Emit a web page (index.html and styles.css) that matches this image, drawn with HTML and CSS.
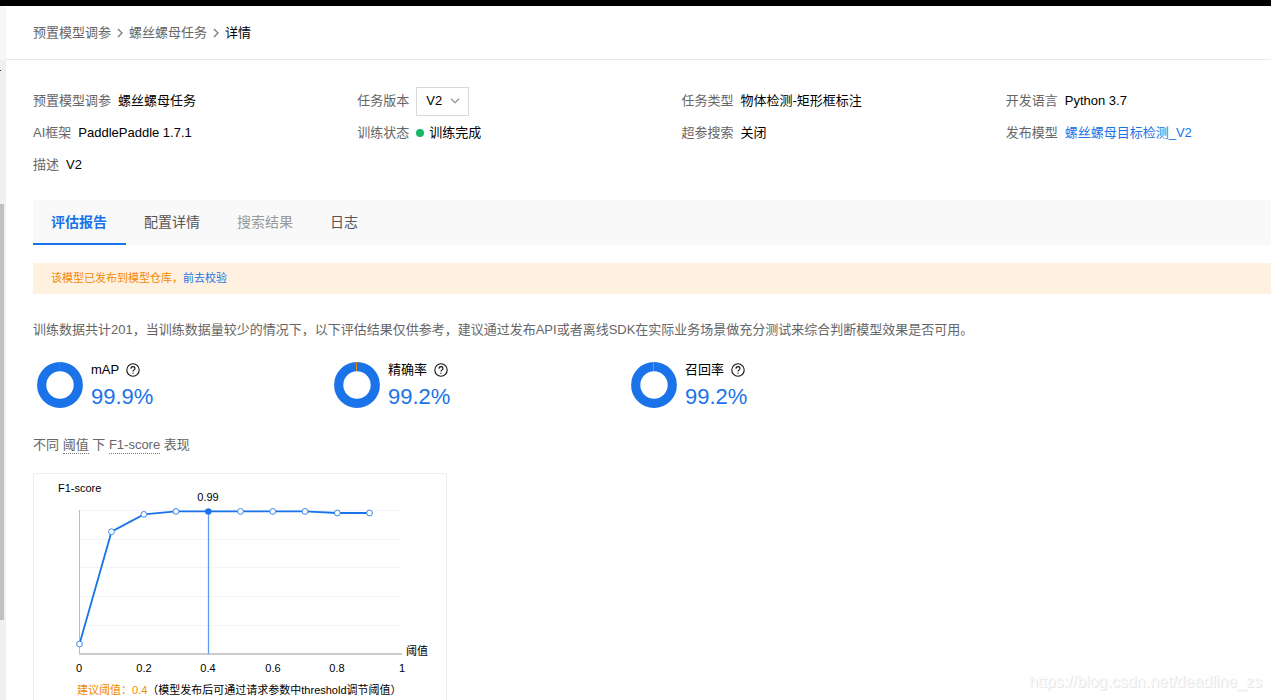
FILE: index.html
```html
<!DOCTYPE html>
<html lang="zh-CN">
<head>
<meta charset="utf-8">
<meta name="viewport" content="width=device-width, initial-scale=1">
<title>螺丝螺母任务 - 详情</title>
<link rel="stylesheet" href="styles.css">
</head>
<body>
<svg class="symbols" aria-hidden="true">
  <symbol id="help" viewBox="0 0 14 14">
    <circle cx="7" cy="7" r="6.2" fill="none" stroke="#111" stroke-width="1.100"/>
    <path d="M5 5.700C5 4.400 5.900 3.600 7 3.600s2 .8 2 1.900c0 1.400-2 1.500-2 3.100" fill="none" stroke="#111" stroke-width="1.100"/>
    <path d="M6.400 9.700h1.200v1.100H6.400z" fill="#111"/>
  </symbol>
  <symbol id="arrow" viewBox="0 0 6 10">
    <path d="M1 1l4 4-4 4" fill="none" stroke="#777" stroke-width="1.200"/>
  </symbol>
</svg>
<div class="app">
  <div class="topbar"></div>
  <div class="shell">
    <div class="rail"><div class="rail-mark"></div><div class="rail-thumb"></div></div>
    <main class="main">
      <nav class="crumbs" aria-label="breadcrumb">
        <a href="#">预置模型调参</a>
        <svg class="arrow"><use href="#arrow"/></svg>
        <a href="#">螺丝螺母任务</a>
        <svg class="arrow"><use href="#arrow"/></svg>
        <span class="current">详情</span>
      </nav>
      <div class="content">
        <dl class="info">
          <div class="field"><dt>预置模型调参</dt><dd>螺丝螺母任务</dd></div>
          <div class="field"><dt><label for="version">任务版本</label></dt><dd class="picker">
            <select id="version"><option>V2</option></select>
            <svg class="chevron" viewBox="0 0 10 6"><path d="M1 .8l4 4 4-4" fill="none" stroke="#999" stroke-width="1.300"/></svg></dd></div>
          <div class="field"><dt>任务类型</dt><dd>物体检测-矩形框标注</dd></div>
          <div class="field"><dt>开发语言</dt><dd>Python 3.7</dd></div>
          <div class="field"><dt>AI框架</dt><dd>PaddlePaddle 1.7.1</dd></div>
          <div class="field"><dt>训练状态</dt><dd class="status">训练完成</dd></div>
          <div class="field"><dt>超参搜索</dt><dd>关闭</dd></div>
          <div class="field"><dt>发布模型</dt><dd><a href="#">螺丝螺母目标检测_V2</a></dd></div>
          <div class="field"><dt>描述</dt><dd>V2</dd></div>
        </dl>
        <div class="tabs" role="tablist">
          <button class="tab active" role="tab" aria-selected="true">评估报告</button>
          <button class="tab" role="tab">配置详情</button>
          <button class="tab" role="tab" disabled>搜索结果</button>
          <button class="tab" role="tab">日志</button>
        </div>
        <div class="notice">该模型已发布到模型仓库，<a href="#">前去校验</a></div>
        <p class="summary">训练数据共计201，当训练数据量较少的情况下，以下评估结果仅供参考，建议通过发布API或者离线SDK在实际业务场景做充分测试来综合判断模型效果是否可用。</p>
        <div class="metrics">
          <div class="metric">
            <svg class="donut" viewBox="0 0 46 46"><circle cx="23" cy="23" r="18.300" fill="none" stroke="#1a73e8" stroke-width="9.200"/><rect x="22" y="0" width="1" height="9" fill="#4d7bbd"/></svg>
            <div><div class="metric-name">mAP <button class="help" aria-label="mAP 说明"><svg><use href="#help"/></svg></button></div><div class="metric-value">99.9%</div></div>
          </div>
          <div class="metric">
            <svg class="donut" viewBox="0 0 46 46"><circle cx="23" cy="23" r="18.300" fill="none" stroke="#1a73e8" stroke-width="9.200"/><rect x="22" y="0" width="1" height="9" fill="#f38900"/></svg>
            <div><div class="metric-name">精确率 <button class="help" aria-label="精确率 说明"><svg><use href="#help"/></svg></button></div><div class="metric-value">99.2%</div></div>
          </div>
          <div class="metric">
            <svg class="donut" viewBox="0 0 46 46"><circle cx="23" cy="23" r="18.300" fill="none" stroke="#1a73e8" stroke-width="9.200"/><rect x="22" y="0" width="1" height="9" fill="#b98b56"/></svg>
            <div><div class="metric-name">召回率 <button class="help" aria-label="召回率 说明"><svg><use href="#help"/></svg></button></div><div class="metric-value">99.2%</div></div>
          </div>
        </div>
        <h2 class="chart-title">不同 <span class="term">阈值</span> 下 <span class="term">F1-score</span> 表现</h2>
        <figure class="chart">
          <svg class="plot" viewBox="0 0 412 206" role="img" aria-label="F1-score">
            <path d="M45 36.500h323M45 65.500h323M45 93.500h323M45 122.500h323M45 151.500h323" stroke="#f2f3fb"/>
            <path d="M45.500 36v144" stroke="#bbb"/>
            <path d="M45 180h323" stroke="#ccc" stroke-width="2"/>
            <path d="M174.500 37v143" stroke="#5c9bee" stroke-width="1.300"/>
            <polyline points="45.500,170 77.500,57.700 109.800,40.400 142,37.400 174.300,37.400 206.500,37.400 238.800,37.400 271,37.400 303.300,39 335.500,39" fill="none" stroke="#1a73e8" stroke-width="1.800"/>
            <g fill="#fff" stroke="#3c88eb">
              <circle cx="45.500" cy="170" r="2.900"/><circle cx="77.500" cy="57.700" r="2.900"/><circle cx="109.800" cy="40.400" r="2.900"/><circle cx="142" cy="37.400" r="2.900"/>
              <circle cx="206.500" cy="37.400" r="2.900"/><circle cx="238.800" cy="37.400" r="2.900"/><circle cx="271" cy="37.400" r="2.900"/><circle cx="303.300" cy="39" r="2.900"/><circle cx="335.500" cy="39" r="2.900"/>
            </g>
            <circle cx="174.300" cy="37.400" r="3.200" fill="#1a73e8"/>
            <text x="24" y="18">F1-score</text>
            <text x="372" y="181">阈值</text>
            <g text-anchor="middle">
              <text x="174" y="27">0.99</text>
              <text x="45" y="198">0</text><text x="110" y="198">0.2</text><text x="174" y="198">0.4</text><text x="239" y="198">0.6</text><text x="303" y="198">0.8</text><text x="368" y="198">1</text>
            </g>
          </svg>
          <figcaption class="caption"><span class="advice">建议阈值：0.4</span>（模型发布后可通过请求参数中threshold调节阈值）</figcaption>
        </figure>
      </div>
    </main>
  </div>
  <div class="watermark">https://blog.csdn.net/deadline_zs</div>
</div>
</body>
</html>
```
FILE: styles.css
```css
* { box-sizing: border-box; }
body {
  margin: 0;
  background: #fff;
  color: #000;
  font: 13px/20px "Liberation Sans", "Noto Sans CJK SC", sans-serif;
}
a { color: #1a73e8; text-decoration: none; }
button, select { font: inherit; color: inherit; }
.symbols { display: none; }

.app { position: relative; display: flex; flex-direction: column; height: 100vh; overflow: hidden; }
.topbar { flex: none; height: 6px; background: #000; }
.shell { flex: 1; display: flex; min-height: 0; }
.rail {
  flex: none;
  width: 6px;
  display: flex;
  flex-direction: column;
  background: #f0f0f0;
  border-top: 54px solid #f7f7f7;
}
.rail-mark { width: 1px; height: 1px; margin-top: 10px; background: #333; }
.rail-thumb { width: 4px; height: 416px; margin-top: 133px; background: #c1c1c1; }
.main { flex: 1; min-width: 0; }

.crumbs {
  display: flex;
  align-items: center;
  gap: 6px;
  height: 54px;
  padding-left: 27px;
  border-bottom: 1px solid #e8e8e8;
}
.crumbs a { color: #666; }
.arrow { width: 6px; height: 10px; }

.content { padding: 25px 0 0 27px; }
.info {
  display: grid;
  grid-template-columns: repeat(3, 11fr) 9fr;
  grid-auto-rows: 32px;
  margin: 0;
}
.field { display: flex; align-items: center; gap: 7px; white-space: nowrap; }
.field dt { color: #666; }
.field dd { margin: 0; }
.picker { position: relative; }
.picker select {
  display: block;
  appearance: none;
  width: 53px;
  height: 29px;
  padding: 0 0 0 9px;
  border: 1px solid #d9d9d9;
  border-radius: 0;
  background: #fff;
}
.chevron { position: absolute; right: 9px; top: 11px; width: 10px; height: 6px; pointer-events: none; }
.status { display: flex; align-items: center; gap: 5px; }
.status::before { content: ""; width: 8px; height: 8px; border-radius: 50%; background: #14b866; }

.tabs { display: flex; height: 45px; margin-top: 19px; background: #f9f9f9; }
.tab {
  padding: 0 19px 0 18px;
  border: 0;
  border-bottom: 2px solid transparent;
  background: none;
  color: #555;
  font-size: 14px;
}
.tab.active { border-color: #1a73e8; color: #1a73e8; font-weight: bold; }
.tab:disabled { color: #999; }

.notice {
  height: 31px;
  margin-top: 18px;
  padding-left: 18px;
  background: #fff1e0;
  color: #f38900;
  font-size: 11px;
  line-height: 31px;
}
.summary { margin: 26px 0 0; color: #666; }

.metrics { display: flex; margin-top: 20px; padding-left: 4px; }
.metric { flex: none; display: flex; gap: 8px; width: 24%; min-width: 297px; }
.donut { width: 46px; height: 46px; margin-top: 2px; }
.metric-name { display: flex; align-items: center; gap: 7px; }
.help { display: flex; padding: 0; border: 0; background: none; }
.help svg { width: 14px; height: 14px; }
.metric-value { color: #1a73e8; font-size: 22px; line-height: 34px; }

.chart-title { margin: 21px 0 0; color: #666; font-size: 13px; font-weight: normal; }
.term { padding-bottom: 1px; border-bottom: 1px dotted #777; }
.chart { width: 414px; margin: 18px 0 0; border: 1px solid #eee; font-size: 11px; }
.plot { display: block; width: 100%; }
.caption { padding: 0 0 20px 43px; white-space: nowrap; }
.advice { color: #f38900; }

.watermark {
  position: absolute;
  right: 9px;
  bottom: 8px;
  color: #fafafa;
  font-size: 16px;
  text-shadow: 1px 1px 0 #e6e6e6;
}
```
